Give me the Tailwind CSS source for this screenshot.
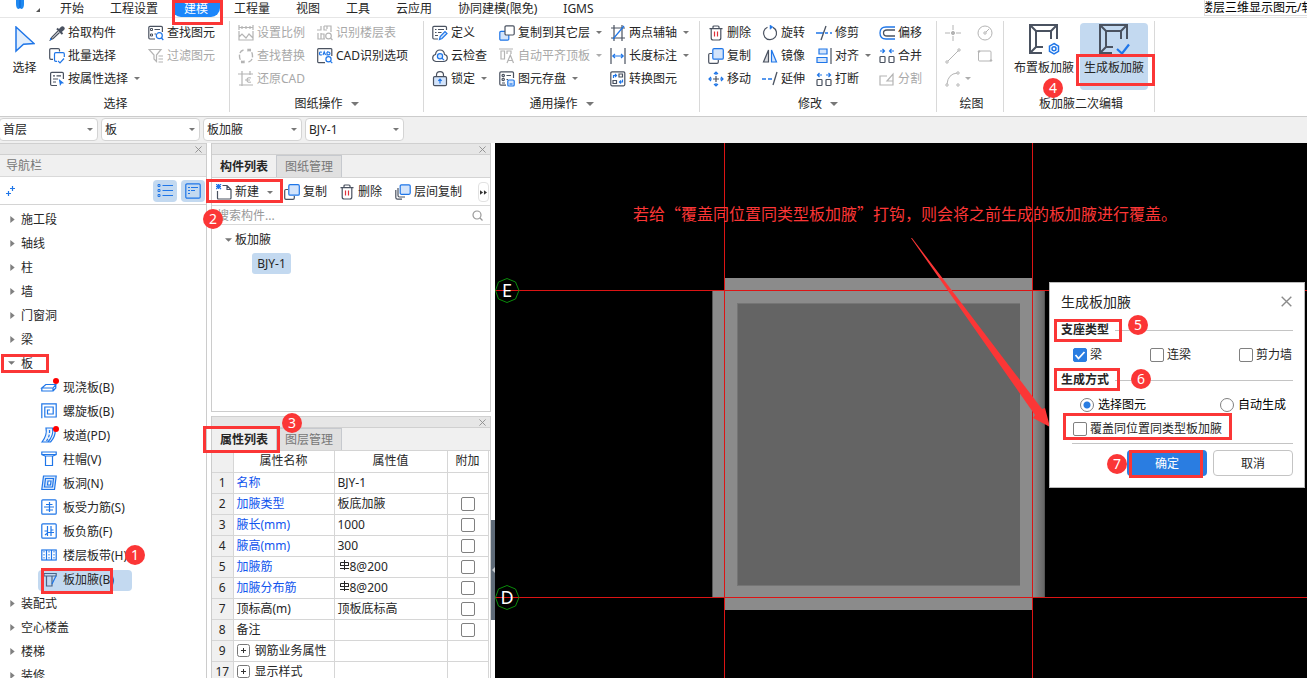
<!DOCTYPE html>
<html lang="zh-CN">
<head>
<meta charset="utf-8">
<title>板加腋建模</title>
<script src="https://cdn.jsdelivr.net/npm/@tailwindcss/browser@4"></script>
</head>
<body class="relative flex h-screen flex-col overflow-hidden bg-white font-['Noto_Sans','Noto_Sans_CJK_SC',sans-serif] text-xs text-[#262626]">

<!-- shared glyphs -->
<svg class="hidden">
  <symbol id="down" viewBox="0 0 6 3"><path d="M0 0h6L3 3z" fill="#777"/></symbol>
  <symbol id="right" viewBox="0 0 5 8"><path d="M0 0l5 4-5 4z" fill="#808080"/></symbol>
  <symbol id="close" viewBox="0 0 8 8"><path d="M.5.5l7 7M7.5.5l-7 7" stroke="#8a8a8a" fill="none"/></symbol>
  <symbol id="trash" viewBox="0 0 16 16" fill="none" stroke="#4a5260" stroke-width="1.2"><path d="M1.5 3.6h13M5 3.5V2q0-1 1-1h4q1 0 1 1v1.5M3.2 3.6v9.400q0 2 2 2h5.600q2 0 2-2V3.600"/><path d="M6.500 6.500v5M9.500 6.500v5" stroke="#e0303a"/></symbol>
  <symbol id="copy" viewBox="0 0 16 16" fill="none" stroke="#4a5260" stroke-width="1.200"><path d="M4 5.500H2q-1.300 0-1.300 1.300V14q0 1.300 1.300 1.300h7q1.300 0 1.300-1.300v-2"/><rect x="4.800" y=".7" width="10.500" height="10.500" rx="1.300" fill="#d3e4fb" stroke="#1f76e8"/></symbol>
  <symbol id="haunch" viewBox="0 0 32 32" fill="none" stroke="#4a5260" stroke-width="2"><path d="M14 30H2V2h27v14M8 24V8h15v8M8 24h7M2 2l6 6M29 2l-6 6M2 30l6-6"/></symbol>
</svg>

<!-- menu tabs -->
<header class="flex h-[18px] shrink-0 items-center border-b border-[#e6e6e6]">
  <div class="flex w-[60px] shrink-0 self-stretch pl-4">
    <svg class="h-[12px] w-[26px]" viewBox="0 0 26 12"><path d="M0 0h8v4q0 5-3 5L4 8 3 9Q0 9 0 4z" fill="#1e88f0"/><path d="M4 0v8" stroke="#0a63d0"/><path d="M24 8v4h-4z" fill="#555"/></svg>
  </div>
  <nav class="flex items-center gap-[26px] whitespace-nowrap">
    <button>开始</button><button>工程设置</button>
    <button class="-mx-3 h-[17px] rounded-b-[9px] bg-[#1b86fb] px-3 text-white">建模</button>
    <button>工程量</button><button>视图</button><button>工具</button><button>云应用</button><button>协同建模(限免)</button><button>IGMS</button>
  </nav>
  <div class="ml-auto h-4 w-[103px] shrink-0 self-start overflow-hidden border-b border-l border-[#ddd] leading-4 whitespace-nowrap text-black"><span class="-ml-1">楼层三维显示图元/软件</span></div>
</header>

<!-- ribbon -->
<div class="flex h-[99px] shrink-0 border-b border-[#ccc] pt-[3px] whitespace-nowrap [&_svg]:shrink-0">

  <section class="flex h-[91px] w-[229px] shrink-0 flex-col">
    <div class="flex">
      <button class="flex w-[49px] flex-col items-center gap-[5px] pt-[5px]">
        <svg class="h-[29px] w-5" viewBox="0 0 20 29"><path d="M1 1l18 16.500-10.500.8L1 25z" fill="#e2eefc" stroke="#1f76e8" stroke-width="1.500"/></svg>
        <span>选择</span>
      </button>
      <div class="w-[99px]">
        <button class="flex h-[23px] items-center gap-[3px]"><svg class="size-4" viewBox="0 0 16 16" fill="none"><path d="M9.500 4.500L11.800 2Q13.500.5 15 2t0 3l-2.500 2.300z" fill="#4a5260"/><path d="M8 3.500l5.500 5.500" stroke="#4a5260" stroke-width="2"/><path d="M9 6l-6 6.200-1.500 2.600 2.700-1.300L10.500 7.500" stroke="#4a5260" stroke-width="1.200"/><path d="M1 12.500l2 2-2 1z" fill="#1f76e8"/></svg>拾取构件</button>
        <button class="flex h-[23px] items-center gap-[3px]"><svg class="size-4" viewBox="0 0 16 16" fill="none" stroke="#4a5260" stroke-width="1.200"><path d="M10.500 3.500V2q0-1.300-1.300-1.300H2Q.7.700.7 2v8q0 1.300 1.300 1.300h2"/><path d="M15.300 9V6q0-1.300-1.300-1.300H6.800q-1.300 0-1.300 1.300v6q0 1.300 1.300 1.300H8" stroke="#1f76e8"/><path d="M9 12.800l2 2 4-4.300" stroke="#1f76e8"/></svg>批量选择</button>
        <button class="flex h-[23px] items-center gap-[3px]"><svg class="size-4" viewBox="0 0 16 16" fill="none" stroke="#4a5260" stroke-width="1.200"><path d="M14.400 8V2.500q0-1.200-1.200-1.200H2.800q-1.200 0-1.200 1.200v10.800q0 1.200 1.200 1.200H8"/><path d="M4 4.800h2M7.500 4.800H12M4 8h5M4 11h3"/><path d="M9.800 8l5.400 4.200-2.600.4-1.600 2.400z" fill="#1f76e8" stroke="none"/></svg>按属性选择<svg class="ml-[3px] h-[3px] w-[6px]"><use href="#down"/></svg></button>
      </div>
      <div>
        <button class="flex h-[23px] items-center gap-[3px]"><svg class="size-4" viewBox="0 0 16 16" fill="none" stroke="#4a5260" stroke-width="1.200"><path d="M14.400 7V2.500q0-1.200-1.200-1.200H2Q.8 1.300.8 2.500v10.300Q.8 14 2 14h5M6.500 4.500H12M6.500 9H8"/><path d="M2.500 3.500h2v2h-2zM2.500 9h2v2h-2z" stroke-width="1"/><circle cx="11.300" cy="10.700" r="3" stroke="#1f76e8"/><path d="M13.500 13l1.800 2" stroke="#1f76e8"/></svg>查找图元</button>
        <button class="flex h-[23px] items-center gap-[3px] text-[#a8a8a8]"><svg class="size-4" viewBox="0 0 16 16" fill="none" stroke="#b4b4b4" stroke-width="1.200"><path d="M1 1.500h12L8.500 7v6.500L6 11V7zM10.500 8H15M10.500 11H15M10.500 14H15"/></svg>过滤图元</button>
      </div>
    </div>
    <div class="mt-auto pl-[2px] text-center">选择</div>
  </section>

  <section class="flex h-[91px] w-[194px] shrink-0 flex-col border-l border-[#d9d9d9]">
    <div class="flex pl-2">
      <div class="w-[79px] text-[#a8a8a8]">
        <button class="flex h-[23px] items-center gap-[3px]"><svg class="size-4" viewBox="0 0 16 16" fill="none" stroke="#b4b4b4" stroke-width="1.200"><path d="M1 0v5M15 0v5M1 2.500h14M4 1v3M8 1v3M12 1v3M1 6v9h14V6M1 12l3-3 4 4 3-4 4 4"/></svg>设置比例</button>
        <button class="flex h-[23px] items-center gap-[3px]"><svg class="size-4" viewBox="0 0 16 16" fill="none" stroke="#b4b4b4" stroke-width="1.400"><path d="M5.500 2Q1.500 3 1.500 8t4 6M3 14.500h3v-3M10.500 14q4-1 4-6t-4-6M13 1.500h-3v3" stroke-dasharray="5 1.500"/></svg>查找替换</button>
        <button class="flex h-[23px] items-center gap-[3px]"><svg class="size-4" viewBox="0 0 16 16" fill="none" stroke="#b4b4b4" stroke-width="1.200"><path d="M4 0v15M0 3h15M12 0v4M1 14h14M13 7q-4-1-4 2t4 2M7 9h5"/></svg>还原CAD</button>
      </div>
      <div>
        <button class="flex h-[23px] items-center gap-[3px] text-[#a8a8a8]"><svg class="size-4" viewBox="0 0 16 16" fill="none" stroke="#b4b4b4" stroke-width="1.200"><path d="M4 1v4H0M7 1h7v6M7 1v4h3M4 8v6M1 8v6h7M4 9h3v5M10 1v3"/><circle cx="11.500" cy="11" r="2.800"/><path d="M13.500 13l2 2"/></svg>识别楼层表</button>
        <button class="flex h-[23px] items-center gap-[3px]"><svg class="size-4" viewBox="0 0 16 16" fill="none" stroke="#4a5260" stroke-width="1.200"><path d="M14.800 8V1.500q0-.8-.8-.8H1.500q-.8 0-.8.8v12.300q0 .8.800.8H8"/><path d="M5 4.300q-2.500-1-2.500 1.200T5 6.700M6 7l1.200-3.200L8.500 7M10 3.900v3q3 .2 3-1.500t-3-1.500" stroke="#1f76e8"/><circle cx="11.500" cy="11.300" r="2.600" stroke="#1f76e8"/><path d="M13.500 13.300l1.800 1.800" stroke="#1f76e8"/></svg>CAD识别选项</button>
      </div>
    </div>
    <div class="mt-auto flex items-center justify-center gap-2">图纸操作<svg class="h-1 w-2"><use href="#down"/></svg></div>
  </section>

  <section class="flex h-[91px] w-[276px] shrink-0 flex-col border-l border-[#d9d9d9]">
    <div class="flex pl-2">
      <div class="w-[67px]">
        <button class="flex h-[23px] items-center gap-[3px]"><svg class="size-4" viewBox="0 0 16 16" fill="none" stroke="#4a5260" stroke-width="1.200"><path d="M14.500 5V2.500q0-1.200-1.200-1.200H2Q.8 1.300.8 2.500v10.300Q.8 14 2 14h4M3 4.500h1.500M6 4.500h6M3 7.500h1.500M6 7.500h3.500M3 10.500h3"/><path d="M7.500 14.500l.7-3L13 6.500l2 2-5 5z" fill="#d3e4fb" stroke="#1f76e8"/></svg>定义</button>
        <button class="flex h-[23px] items-center gap-[3px]"><svg class="size-4" viewBox="0 0 16 16" fill="none" stroke="#4a5260" stroke-width="1.200"><path d="M4 13.500Q.7 13 .7 10T3.500 6.500Q4 2 8 2t4.500 4.500Q15.300 7 15.300 10T12 13.500z"/><circle cx="8" cy="8.200" r="2.600" fill="#d3e4fb" stroke="#1f76e8"/><path d="M9.800 10l2.200 2.200" stroke="#1f76e8"/></svg>云检查</button>
        <button class="flex h-[23px] items-center gap-[3px]"><svg class="size-4" viewBox="0 0 16 16" fill="none" stroke="#4a5260" stroke-width="1.200"><path d="M4.500 5.500V4q0-3.300 3.500-3.300T11.500 4v1.500"/><rect x="1.500" y="5.600" width="13" height="9" rx="1.200" fill="#d3e4fb"/><path d="M8 12.500V9M6.300 9.800L8 8l1.700 1.800" stroke="#1f76e8"/></svg>锁定<svg class="ml-[3px] h-[3px] w-[6px]"><use href="#down"/></svg></button>
      </div>
      <div class="w-[111px]">
        <button class="flex h-[23px] items-center gap-[3px]"><svg class="size-4" viewBox="0 0 16 16" fill="none" stroke-width="1.200"><rect x=".8" y="6.300" width="9" height="8.900" rx="1.200" fill="#d3e4fb" stroke="#1f76e8"/><rect x="6" y=".8" width="9.200" height="9.200" rx="1.200" fill="#fff" stroke="#4a5260"/></svg>复制到其它层<svg class="ml-[3px] h-[3px] w-[6px]"><use href="#down"/></svg></button>
        <button class="flex h-[23px] items-center gap-[3px] text-[#a8a8a8]"><svg class="size-4" viewBox="0 0 16 16" fill="none" stroke="#b4b4b4" stroke-width="1.200"><path d="M0 1h14M2 3h3.500v8H2zM8 6V3h4v3M8 15l3.300-8L14.500 15M9.200 12.500h4"/></svg>自动平齐顶板<svg class="ml-[3px] h-[3px] w-[6px] opacity-60"><use href="#down"/></svg></button>
        <button class="flex h-[23px] items-center gap-[3px]"><svg class="size-4" viewBox="0 0 16 16" fill="none" stroke="#4a5260" stroke-width="1.200"><path d="M14.500 7V2q0-1.200-1.200-1.200H2Q.8.800.8 2v11Q.8 14.200 2 14.200h5M7.500 4.500H12M7.500 8.500H9M3 12h3"/><circle cx="4.200" cy="4.500" r="1.200"/><circle cx="4.200" cy="8.500" r="1.200"/><rect x="8.800" y="9" width="6.400" height="6" rx="1" fill="#d3e4fb" stroke="#1f76e8"/><path d="M10.500 13h3" stroke="#1f76e8"/></svg>图元存盘<svg class="ml-[3px] h-[3px] w-[6px]"><use href="#down"/></svg></button>
      </div>
      <div>
        <button class="flex h-[23px] items-center gap-[3px]"><svg class="size-4" viewBox="0 0 16 16" fill="none" stroke="#4a5260" stroke-width="1.200"><path d="M4 0v16M12 0v16M1 3h14M1 13h14"/><path d="M3 14L14 1" stroke="#1f76e8"/></svg>两点辅轴<svg class="ml-[3px] h-[3px] w-[6px]"><use href="#down"/></svg></button>
        <button class="flex h-[23px] items-center gap-[3px]"><svg class="size-4" viewBox="0 0 16 16" fill="none" stroke="#4a5260" stroke-width="1.200"><path d="M1 0v16M15 0v16"/><path d="M2.500 8h11M5 6L2.800 8 5 10M11 6l2.200 2L11 10" stroke="#1f76e8"/></svg>长度标注<svg class="ml-[3px] h-[3px] w-[6px]"><use href="#down"/></svg></button>
        <button class="flex h-[23px] items-center gap-[3px]"><svg class="size-4" viewBox="0 0 16 16" fill="none" stroke="#4a5260" stroke-width="1.200"><rect x=".8" y=".8" width="14" height="14" rx="1.200"/><path d="M9 3h3.500v3H9zM3 9.500h3.500v3H3z"/><path d="M3.500 7V4.500H6M5 3l1.500 1.500L5 6M12.500 8.500V11H10M11 9.500L9.500 11l1.500 1.500" stroke="#1f76e8"/></svg>转换图元</button>
      </div>
    </div>
    <div class="mt-auto flex items-center justify-center gap-2">通用操作<svg class="h-1 w-2"><use href="#down"/></svg></div>
  </section>

  <section class="flex h-[91px] w-[237px] shrink-0 flex-col border-l border-[#d9d9d9]">
    <div class="flex pl-2">
      <div class="w-[54px]">
        <button class="flex h-[23px] items-center gap-[3px]"><svg class="size-4"><use href="#trash"/></svg>删除</button>
        <button class="flex h-[23px] items-center gap-[3px]"><svg class="size-4"><use href="#copy"/></svg>复制</button>
        <button class="flex h-[23px] items-center gap-[3px]"><svg class="size-4" viewBox="0 0 16 16" fill="none" stroke="#1f76e8" stroke-width="1.200"><path d="M8 5v6M5 8h6" stroke="#4a5260"/><path d="M8 4V1M6 3l2-2 2 2M8 12v3M6 13l2 2 2-2M4 8H1M3 6L1 8l2 2M12 8h3M13 6l2 2-2 2"/></svg>移动</button>
      </div>
      <div class="w-[54px]">
        <button class="flex h-[23px] items-center gap-[3px]"><svg class="size-4" viewBox="0 0 16 16" fill="none" stroke="#4a5260" stroke-width="1.200"><path d="M5.500 2.200a6.500 6.500 0 1 0 5.500.2"/><path d="M8 0l3 2-3 2.300z" fill="#1f76e8" stroke="#1f76e8" stroke-width=".5"/></svg>旋转</button>
        <button class="flex h-[23px] items-center gap-[3px]"><svg class="size-4" viewBox="0 0 16 16" fill="none" stroke-width="1.200"><path d="M6.500 2v12H1.500z" fill="#d8dade" stroke="#4a5260"/><path d="M9.500 2v12h5z" fill="#d3e4fb" stroke="#1f76e8"/></svg>镜像</button>
        <button class="flex h-[23px] items-center gap-[3px]"><svg class="size-4" viewBox="0 0 16 16" fill="none" stroke-width="1.300"><path d="M0 8h4M6 8h4" stroke="#1f76e8"/><path d="M11 14l4-13" stroke="#4a5260"/></svg>延伸</button>
      </div>
      <div class="w-[63px]">
        <button class="flex h-[23px] items-center gap-[3px]"><svg class="size-4" viewBox="0 0 16 16" fill="none" stroke-width="1.300"><path d="M0 8h7M9 8h3M14 8h2" stroke="#1f76e8"/><path d="M5 15L10 1" stroke="#4a5260"/></svg>修剪</button>
        <button class="flex h-[23px] items-center gap-[3px]"><svg class="size-4" viewBox="0 0 16 16" fill="#d3e4fb" stroke="#1f76e8" stroke-width="1.200"><path d="M3 1h8v5H3zM1 9.500h10v5H1z"/><path d="M15 0v16" stroke="#4a5260"/></svg>对齐<svg class="ml-[3px] h-[3px] w-[6px]"><use href="#down"/></svg></button>
        <button class="flex h-[23px] items-center gap-[3px]"><svg class="size-4" viewBox="0 0 16 16" fill="none" stroke="#4a5260" stroke-width="1.200"><rect x="1" y="8.500" width="5" height="6" rx=".8"/><rect x="10" y="8.500" width="5" height="6" rx=".8"/><path d="M6 4H1.500M3.500 2l-2 2 2 2M10 4h4.500M12.500 2l2 2-2 2" stroke="#1f76e8"/></svg>打断</button>
      </div>
      <div>
        <button class="flex h-[23px] items-center gap-[3px]"><svg class="size-4" viewBox="0 0 16 16" fill="none" stroke-width="1.300"><path d="M16 2H7Q1 2 1 8t6 6h9" stroke="#1f76e8"/><path d="M16 5H8Q4.500 5 4.500 8T8 11h8" stroke="#4a5260"/></svg>偏移</button>
        <button class="flex h-[23px] items-center gap-[3px]"><svg class="size-4" viewBox="0 0 16 16" fill="none" stroke="#4a5260" stroke-width="1.200"><rect x="1" y="8.500" width="5" height="6" rx=".8"/><rect x="10" y="8.500" width="5" height="6" rx=".8"/><path d="M1 3h4.500M3.500 1l2 2-2 2M15 3h-4.500M12.500 1l-2 2 2 2" stroke="#1f76e8"/></svg>合并</button>
        <button class="flex h-[23px] items-center gap-[3px] text-[#a8a8a8]"><svg class="size-4" viewBox="0 0 16 16" fill="none" stroke="#b4b4b4" stroke-width="1.200"><path d="M8 5H1v9h13v-4M8 10l6-7v7z"/></svg>分割</button>
      </div>
    </div>
    <div class="mt-auto flex items-center justify-center gap-2">修改<svg class="h-1 w-2"><use href="#down"/></svg></div>
  </section>

  <section class="flex h-[91px] w-[67px] shrink-0 flex-col border-l border-[#d9d9d9]">
    <div class="grid grid-cols-[32px_16px] pl-2">
      <button class="flex h-[23px] items-center" aria-label="点"><svg class="size-4" viewBox="0 0 16 16" stroke="#b4b4b4" fill="#b4b4b4"><path d="M8 0v5M8 11v5M0 8h5M11 8h5"/><circle cx="8" cy="8" r="1.600"/></svg></button>
      <button class="flex h-[23px] items-center" aria-label="圆"><svg class="size-4" viewBox="0 0 16 16" stroke="#b4b4b4" fill="none"><circle cx="8" cy="8" r="7"/><circle cx="8" cy="8" r="1.200"/><path d="M9 7l3-3"/></svg></button>
      <button class="flex h-[23px] items-center" aria-label="直线"><svg class="size-4" viewBox="0 0 16 16" stroke="#b4b4b4" fill="none"><path d="M3 13L13.500 2.500"/><circle cx="2" cy="14" r="1.200"/><circle cx="14" cy="2" r="1.200"/></svg></button>
      <button class="flex h-[23px] items-center" aria-label="矩形"><svg class="size-4" viewBox="0 0 16 16" stroke="#b4b4b4" fill="none"><rect x="1.500" y="3" width="12.500" height="10" rx="1"/><circle cx="14" cy="12.500" r=".8" fill="#b4b4b4"/><circle cx="2" cy="3.500" r=".8" fill="#b4b4b4"/></svg></button>
      <button class="flex h-[23px] items-center gap-1" aria-label="弧"><svg class="size-4" viewBox="0 0 16 16" stroke="#b4b4b4" fill="none"><path d="M2 13Q3 3 12 2"/><circle cx="2" cy="14" r="1.200"/><circle cx="13" cy="2" r="1.200"/><circle cx="13" cy="14" r="1.200"/></svg><svg class="h-[3px] w-[6px] opacity-60"><use href="#down"/></svg></button>
    </div>
    <div class="mt-auto pl-[3px] text-center">绘图</div>
  </section>

  <section class="flex h-[91px] w-[152px] shrink-0 flex-col border-x border-[#d9d9d9] pt-[2px]">
    <div class="flex px-[6px]">
      <button class="flex h-[67px] w-[68px] flex-col items-center gap-[5px] rounded">
        <svg class="size-8" viewBox="0 0 32 32" fill="none" stroke="#1f76e8" stroke-width="1.500"><use href="#haunch"/><path d="M26 20.500l4.500 2.600v5.200L26 31l-4.500-2.700v-5.200z"/><circle cx="26" cy="25.700" r="2"/></svg>
        布置板加腋</button>
      <button class="ml-[2px] flex h-[67px] w-[68px] flex-col items-center gap-[5px] rounded bg-[#c3d9f0]">
        <svg class="size-8" viewBox="0 0 32 32" fill="none" stroke="#1f76e8" stroke-width="2.200"><use href="#haunch"/><path d="M19 26l5 4.500 7-9"/></svg>
        生成板加腋</button>
    </div>
    <div class="mt-auto pl-1 text-center">板加腋二次编辑</div>
  </section>
</div>

<!-- context selectors -->
<div class="flex h-[26px] shrink-0 gap-[3px] bg-[#f0f0f0] pt-px">
  <label class="relative -ml-px block h-[23px] w-[99px]"><select aria-label="楼层" class="size-full appearance-none rounded border border-[#d4d4d4] bg-white pl-[3px]"><option>首层</option></select><svg class="pointer-events-none absolute top-[10px] right-[5px] h-[3px] w-[6px]"><use href="#down"/></svg></label>
  <label class="relative block h-[23px] w-[99px]"><select aria-label="类别" class="size-full appearance-none rounded border border-[#d4d4d4] bg-white pl-[3px]"><option>板</option></select><svg class="pointer-events-none absolute top-[10px] right-[5px] h-[3px] w-[6px]"><use href="#down"/></svg></label>
  <label class="relative block h-[23px] w-[99px]"><select aria-label="构件类型" class="size-full appearance-none rounded border border-[#d4d4d4] bg-white pl-[3px]"><option>板加腋</option></select><svg class="pointer-events-none absolute top-[10px] right-[5px] h-[3px] w-[6px]"><use href="#down"/></svg></label>
  <label class="relative block h-[23px] w-[99px]"><select aria-label="构件" class="size-full appearance-none rounded border border-[#d4d4d4] bg-white pl-[3px]"><option>BJY-1</option></select><svg class="pointer-events-none absolute top-[10px] right-[5px] h-[3px] w-[6px]"><use href="#down"/></svg></label>
</div>

<main class="flex min-h-0 flex-1">

  <!-- navigation -->
  <aside class="flex w-[207px] shrink-0 flex-col overflow-hidden border-r border-[#ccc] whitespace-nowrap">
    <div class="flex h-3 shrink-0 items-center justify-end border-y border-[#d0d0d0] bg-[#e6e6e6] pr-1"><button aria-label="关闭"><svg class="size-[7px]"><use href="#close"/></svg></button></div>
    <h2 class="flex h-[22px] shrink-0 items-center border-b border-[#d9d9d9] bg-[#f0f0f0] pt-px pl-[6px] text-[#777]">导航栏</h2>
    <div class="flex h-7 shrink-0 items-center gap-1 border-b border-[#d4d4d4] pr-px pl-[6px]">
      <button class="mr-auto" aria-label="添加"><svg class="size-[10px]" viewBox="0 0 10 10" stroke="#1f76e8" fill="none"><path d="M6.500 0v5M4 2.500h5M2.500 5v5M0 7.500h5" stroke-width="1.200"/></svg></button>
      <button class="flex h-[22px] w-6 items-center justify-center rounded bg-[#c3d9f0]" aria-label="列表"><svg class="size-4" viewBox="0 0 16 16" stroke="#1f76e8" fill="none"><path d="M1 1.500h2v2H1zM1 6.500h2v2H1zM1 11.500h2v2H1zM5.500 2.500H16M5.500 7.500H16M5.500 12.500H16"/></svg></button>
      <button class="flex h-[22px] w-6 items-center justify-center rounded bg-[#c3d9f0]" aria-label="详情"><svg class="size-4" viewBox="0 0 16 16" stroke="#1f76e8" fill="none" stroke-width="1.200"><rect x=".8" y=".8" width="14.400" height="14.400" rx="1.200"/><path d="M3 4.500h2M6 4.500h7M3 7.500h2M6 7.500h4M3 10.500h2"/></svg></button>
    </div>
    <ul class="pt-[3px] [&>li]:flex [&>li]:h-6 [&>li]:shrink-0 [&>li]:items-center">
      <li class="gap-[6px] pl-[10px]"><svg class="mb-[2px] h-[7px] w-[5px]"><use href="#right"/></svg>施工段</li>
      <li class="gap-[6px] pl-[10px]"><svg class="mb-[2px] h-[7px] w-[5px]"><use href="#right"/></svg>轴线</li>
      <li class="gap-[6px] pl-[10px]"><svg class="mb-[2px] h-[7px] w-[5px]"><use href="#right"/></svg>柱</li>
      <li class="gap-[6px] pl-[10px]"><svg class="mb-[2px] h-[7px] w-[5px]"><use href="#right"/></svg>墙</li>
      <li class="gap-[6px] pl-[10px]"><svg class="mb-[2px] h-[7px] w-[5px]"><use href="#right"/></svg>门窗洞</li>
      <li class="gap-[6px] pl-[10px]"><svg class="mb-[2px] h-[7px] w-[5px]"><use href="#right"/></svg>梁</li>
      <li class="gap-[6px] pl-2"><svg class="mb-[2px] h-[4px] w-[7px]"><use href="#down"/></svg>板</li>
      <li class="gap-[6px] pl-[41px]"><svg class="mb-[2px] size-4 overflow-visible" viewBox="0 0 16 16" fill="none" stroke="#1f76e8" stroke-width="1.200"><path d="M.8 9l4-3.500h10L12 9zM.8 9v3H12V9M12 12l2.800-3V5.500"/><circle cx="15" cy="2" r="3" fill="#f00" stroke="none"/></svg>现浇板(B)</li>
      <li class="gap-[6px] pl-[41px]"><svg class="mb-[2px] size-4" viewBox="0 0 16 16" fill="none" stroke="#1f76e8" stroke-width="1.200"><path d="M.8 15.200V.8h14.400V14H3.800V4h8.400v7H6.500V7H9"/></svg>螺旋板(B)</li>
      <li class="gap-[6px] pl-[41px]"><svg class="mb-[2px] size-4 overflow-visible" viewBox="0 0 16 16" fill="none" stroke="#1f76e8" stroke-width="1.200"><path d="M5 1q1.500 7-4 14h6q6-7 4.500-14zM11.500 1l2.500 1.500Q15 9 9.500 15H7" fill="#eaf2fd"/><path d="M8.500 3q.5 6-3 11" stroke-dasharray="3 1.500"/><circle cx="15" cy="2" r="3" fill="#f00" stroke="none"/></svg>坡道(PD)</li>
      <li class="gap-[6px] pl-[41px]"><svg class="mb-[2px] size-4" viewBox="0 0 16 16" fill="none" stroke="#1f76e8" stroke-width="1.200"><path d="M.8 1h14.400v2.500L12 5H4L.8 3.500zM4.500 5v9.500h7V5M.8 3.500h14.400"/></svg>柱帽(V)</li>
      <li class="gap-[6px] pl-[41px]"><svg class="mb-[2px] size-4" viewBox="0 0 16 16" fill="none" stroke="#1f76e8" stroke-width="1.200"><path d="M2.500 1h12.700L13.500 14.500H.8z" fill="#d3e4fb"/><path d="M4.500 3.500h8L11.500 12h-8z"/><path d="M7 6h3l-.5 4h-3z" fill="#fff"/></svg>板洞(N)</li>
      <li class="gap-[6px] pl-[41px]"><svg class="mb-[2px] size-4" viewBox="0 0 16 16" fill="none" stroke="#1f76e8" stroke-width="1.200"><rect x=".8" y=".8" width="14.400" height="14.400" rx="1"/><path d="M5 5.500h6.500M3 8h10M5 11h7M8.500 3v10"/></svg>板受力筋(S)</li>
      <li class="gap-[6px] pl-[41px]"><svg class="mb-[2px] size-4" viewBox="0 0 16 16" fill="none" stroke="#1f76e8" stroke-width="1.200"><rect x=".8" y=".8" width="14.400" height="14.400" rx="1"/><path d="M3.500 8h3M6.500 3v10M10 3v10M6.500 9.500H13M4 12l2.500-2M10 7h2.500"/></svg>板负筋(F)</li>
      <li class="gap-[6px] pl-[41px]"><svg class="mb-[2px] size-4" viewBox="0 0 16 16" fill="none" stroke="#1f76e8" stroke-width="1.200"><rect x=".8" y="3" width="14.400" height="10"/><path d="M5.500 3v10M10.500 3v10"/><path d="M3 4v8M8 4v8M13 4v8" stroke-width="1" stroke-dasharray="1.500 1.500"/></svg>楼层板带(H)</li>
      <li class="pl-[38px]"><button class="flex h-[21px] w-[94px] items-center gap-[6px] rounded bg-[#c3d9f0] pl-[3px]"><svg class="mb-[2px] size-4" viewBox="0 0 16 16" fill="none" stroke="#4a6488" stroke-width="1.200"><path d="M3 2.500h12.200V5H3zM5.500 5v10h5.500V5"/><path d="M15 5l-4 8M1.500 5H3" stroke="#1f76e8"/></svg>板加腋(B)</button></li>
      <li class="gap-[6px] pl-[10px]"><svg class="mb-[2px] h-[7px] w-[5px]"><use href="#right"/></svg>装配式</li>
      <li class="gap-[6px] pl-[10px]"><svg class="mb-[2px] h-[7px] w-[5px]"><use href="#right"/></svg>空心楼盖</li>
      <li class="gap-[6px] pl-[10px]"><svg class="mb-[2px] h-[7px] w-[5px]"><use href="#right"/></svg>楼梯</li>
      <li class="gap-[6px] pl-[10px]"><svg class="mb-[2px] h-[7px] w-[5px]"><use href="#right"/></svg>装修</li>
    </ul>
  </aside>

  <!-- component list and properties -->
  <div class="ml-1 flex w-[280px] shrink-0 flex-col overflow-hidden whitespace-nowrap">
    <section class="flex h-[269px] shrink-0 flex-col border border-t-0 border-[#ccc]">
      <div class="flex h-3 shrink-0 items-center justify-end border-y border-[#d0d0d0] bg-[#e6e6e6] pr-1"><button aria-label="关闭"><svg class="size-[7px]"><use href="#close"/></svg></button></div>
      <div class="flex h-[23px] shrink-0 border-b border-[#d4d4d4] bg-[#f0f0f0]">
        <button class="w-16 pt-px font-bold">构件列表</button>
        <button class="w-[66px] border border-b-0 border-[#c6c9ce] bg-[#e0e0e0] text-[#777]">图纸管理</button>
      </div>
      <div class="flex h-7 shrink-0 items-center border-b border-[#d9d9d9] pt-px pl-1">
        <button class="flex w-[68px] items-center gap-[3px]"><svg class="size-4" viewBox="0 0 16 16" fill="none" stroke="#4a5260" stroke-width="1.200"><path d="M6.500 1.500H11l4 4V14q0 1-1 1H2.500q-1 0-1-1V7M11 1.500v4h4"/><path d="M0 0l5 5M5 0L0 5M2.500 0v5M0 2.500h5" stroke="#1f76e8"/></svg>新建<svg class="ml-[5px] h-[3px] w-[6px]"><use href="#down"/></svg></button>
        <button class="flex w-[55px] items-center gap-[3px]"><svg class="size-4"><use href="#copy"/></svg>复制</button>
        <button class="flex w-14 items-center gap-[3px]"><svg class="size-4"><use href="#trash"/></svg>删除</button>
        <button class="flex items-center gap-[3px]"><svg class="size-4" viewBox="0 0 16 16" fill="none" stroke="#4a5260" stroke-width="1.200"><path d="M.8 6v7.500q0 1.700 1.700 1.700H7M3 4v7.500q0 1.500 1.500 1.500H10"/><rect x="5.200" y=".8" width="10" height="9.500" rx="1.200" fill="#d3e4fb" stroke="#1f76e8"/></svg>层间复制</button>
        <button class="mr-px ml-auto flex h-5 w-[11px] items-center justify-center rounded border border-[#e2e2e2]" aria-label="更多"><svg class="h-[5px] w-[7px]" viewBox="0 0 8 5"><path d="M0 0l3.500 2.500L0 5zM4.500 0L8 2.500 4.500 5z" fill="#333"/></svg></button>
      </div>
      <div class="flex h-[19px] shrink-0 items-center border-b border-[#d9d9d9] pr-[7px] pl-[5px]">
        <input aria-label="搜索构件" placeholder="搜索构件..." class="min-w-0 flex-1 pt-[2px] outline-none placeholder:text-[#999]">
        <svg class="size-[11px]" viewBox="0 0 11 11" fill="none" stroke="#999" stroke-width="1.200"><circle cx="5" cy="5" r="4"/><path d="M8 8l2.500 2.500"/></svg>
      </div>
      <div class="flex h-[26px] items-center gap-[3px] pt-1 pl-[13px]"><svg class="h-[4px] w-[7px]"><use href="#down"/></svg>板加腋</div>
      <button class="mt-[2px] ml-10 h-[21px] w-[39px] rounded-[3px] bg-[#c3d9f0]">BJY-1</button>
    </section>

    <section class="mt-1 flex min-h-0 flex-1 flex-col overflow-hidden border-x border-[#ccc]">
      <div class="flex h-3 shrink-0 items-center justify-end border-y border-[#d0d0d0] bg-[#e6e6e6] pr-1"><button aria-label="关闭"><svg class="size-[7px]"><use href="#close"/></svg></button></div>
      <div class="flex h-[23px] shrink-0 border-b border-[#d4d4d4] bg-[#f0f0f0]">
        <button class="w-16 pt-px font-bold">属性列表</button>
        <button class="w-[66px] border border-b-0 border-[#c6c9ce] bg-[#e0e0e0] text-[#777]">图层管理</button>
      </div>
      <table class="w-[276px] table-fixed border-collapse [&_input]:mx-auto [&_input]:block [&_input]:size-[14px] [&_input]:appearance-none [&_input]:rounded-[2px] [&_input]:border [&_input]:border-[#808080] [&_td]:border-r [&_td]:border-b [&_td]:border-[#d6d6d6] [&_td]:p-0 [&_td]:pl-[3px] [&_td:last-child]:pl-0 [&_th]:border-r [&_th]:border-b [&_th]:border-[#d6d6d6] [&_th]:p-0 [&_th]:font-normal [&_tr]:h-[21px]">
        <colgroup><col class="w-[21px]"><col class="w-[101px]"><col class="w-[113px]"><col class="w-[41px]"></colgroup>
        <thead><tr><th class="bg-[#f0f0f0]"></th><th>属性名称</th><th>属性值</th><th>附加</th></tr></thead>
        <tbody>
          <tr><th class="bg-[#f0f0f0]">1</th><td class="text-[#1155ee]">名称</td><td>BJY-1</td><td></td></tr>
          <tr><th class="bg-[#f0f0f0]">2</th><td class="text-[#1155ee]">加腋类型</td><td>板底加腋</td><td><input type="checkbox" aria-label="附加加腋类型"></td></tr>
          <tr><th class="bg-[#f0f0f0]">3</th><td class="text-[#1155ee]">腋长(mm)</td><td>1000</td><td><input type="checkbox" aria-label="附加腋长"></td></tr>
          <tr><th class="bg-[#f0f0f0]">4</th><td class="text-[#1155ee]">腋高(mm)</td><td>300</td><td><input type="checkbox" aria-label="附加腋高"></td></tr>
          <tr><th class="bg-[#f0f0f0]">5</th><td class="text-[#1155ee]">加腋筋</td><td><span class="flex items-center gap-px pl-[2px]"><svg class="mb-[3px] h-[10px] w-[9px]" viewBox="0 0 9 10" fill="none" stroke="#262626"><path d="M4.500 0v10M.5 6V2.500h8V6M.5 5.500h8M0 8.500h9"/></svg>8@200</span></td><td><input type="checkbox" aria-label="附加加腋筋"></td></tr>
          <tr><th class="bg-[#f0f0f0]">6</th><td class="text-[#1155ee]">加腋分布筋</td><td><span class="flex items-center gap-px pl-[2px]"><svg class="mb-[3px] h-[10px] w-[9px]" viewBox="0 0 9 10" fill="none" stroke="#262626"><path d="M4.500 0v10M.5 6V2.500h8V6M.5 5.500h8M0 8.500h9"/></svg>8@200</span></td><td><input type="checkbox" aria-label="附加加腋分布筋"></td></tr>
          <tr><th class="bg-[#f0f0f0]">7</th><td>顶标高(m)</td><td>顶板底标高</td><td><input type="checkbox" aria-label="附加顶标高"></td></tr>
          <tr><th class="bg-[#f0f0f0]">8</th><td>备注</td><td></td><td><input type="checkbox" aria-label="附加备注"></td></tr>
          <tr><th class="bg-[#f0f0f0]">9</th><td><button class="flex items-center gap-[5px]"><svg class="size-[13px]" viewBox="0 0 13 13" fill="none" stroke="#777"><rect x=".5" y=".5" width="12" height="12" rx="2"/><path d="M4 6.500h5M6.500 4v5" stroke="#333"/></svg>钢筋业务属性</button></td><td></td><td></td></tr>
          <tr><th class="bg-[#f0f0f0]">17</th><td><button class="flex items-center gap-[5px]"><svg class="size-[13px]" viewBox="0 0 13 13" fill="none" stroke="#777"><rect x=".5" y=".5" width="12" height="12" rx="2"/><path d="M4 6.500h5M6.500 4v5" stroke="#333"/></svg>显示样式</button></td><td></td><td></td></tr>
        </tbody>
      </table>
    </section>
  </div>

  <!-- splitter -->
  <div class="w-1 shrink-0 pt-[377px]"><button class="flex h-[100px] w-1 items-center justify-end bg-[#5f6b78]" aria-label="折叠"><svg class="h-[6px] w-[3px]" viewBox="0 0 3 6"><path d="M3 0v6L0 3z" fill="#c8ccd0"/></svg></button></div>

  <!-- drawing area -->
  <div class="relative min-w-0 flex-1 overflow-hidden bg-black">
    <svg class="absolute top-0 left-0 h-full w-full" fill="none">
      <defs><linearGradient id="edge"><stop offset="0" stop-color="#8b8b8b"/><stop offset="1" stop-color="#666"/></linearGradient></defs>
      <rect x="230" y="135" width="308" height="332" fill="#8b8b8b"/>
      <rect x="218" y="148" width="320" height="307" fill="#8b8b8b"/>
      <rect x="538" y="148" width="11" height="307" fill="url(#edge)"/>
      <path d="M217.500 148v307M549.500 148v307" stroke="#555"/>
      <rect x="242" y="160" width="283" height="283" fill="#646464"/>
      <path d="M242.500 443V160M242 160.500h283M242 442.500h283" stroke="#757575"/>
      <g fill="#dc1414">
        <rect x="229" y="0" width="1" height="100%"/>
        <rect x="537" y="0" width="1" height="100%"/>
        <rect x="0" y="147" width="100%" height="1"/>
        <rect x="0" y="454" width="100%" height="1"/>
      </g>
      <path d="M12 135.500l8.500 3.500 3.500 8.500-3.500 8.500-8.500 3.500-8.500-3.500L.5 147.500l3-8.500zM12 442.500l8.500 3.500 3.500 8.500-3.500 8.500-8.500 3.500-8.500-3.500-3-8.500 3-8.500z" stroke="#0a8a0a"/>
      <text x="12" y="154" text-anchor="middle" font-size="18" fill="#fff">E</text>
      <text x="12" y="461" text-anchor="middle" font-size="18" fill="#fff">D</text>
    </svg>
    <p class="absolute top-[58px] left-[138px] font-['Noto_Sans_CJK_SC',sans-serif] text-base whitespace-nowrap text-[#fb3636]">若给“覆盖同位置同类型板加腋”打钩，则会将之前生成的板加腋进行覆盖。</p>
    <svg class="absolute top-0 left-0 h-[300px] w-[560px]"><path d="M416 95h1L547 266l3-1 5 19-17-9 2-3z" fill="#fb3636"/></svg>

    <!-- dialog -->
    <form class="absolute top-[139px] left-[554px] w-64 border border-[#bbb] bg-white px-[11px] pb-[11px] whitespace-nowrap [&_input[type=checkbox]]:size-[14px] [&_input[type=checkbox]]:appearance-none [&_input[type=checkbox]]:rounded-[2px] [&_input[type=checkbox]]:border [&_input[type=checkbox]]:border-[#808080] [&_input[type=radio]]:size-[14px] [&_input[type=radio]]:appearance-none [&_input[type=radio]]:rounded-full [&_input[type=radio]]:border [&_input[type=radio]]:border-[#808080]" role="dialog" aria-label="生成板加腋">
      <div class="flex h-[37px] items-center justify-between text-sm">生成板加腋<button type="button" aria-label="关闭" class="mr-px"><svg class="size-[11px]" viewBox="0 0 8 8"><use href="#close"/></svg></button></div>
      <div class="flex h-5 items-center gap-[6px] font-bold">支座类型<span class="h-px flex-1 bg-[#c4c4c4]"></span></div>
      <div class="flex h-[30px] items-center justify-between pr-px pl-3">
        <label class="flex items-center gap-[3px]"><span class="relative flex"><input type="checkbox" checked class="checked:border-[#2a7de1]! checked:bg-[#2a7de1]"><svg class="pointer-events-none absolute inset-0 size-[14px]" viewBox="0 0 14 14" fill="none" stroke="#fff" stroke-width="1.800"><path d="M2.500 7l3 3.500L11.500 4"/></svg></span>梁</label>
        <label class="flex items-center gap-[3px]"><input type="checkbox">连梁</label>
        <label class="flex items-center gap-[3px]"><input type="checkbox">剪力墙</label>
      </div>
      <div class="flex h-5 items-center gap-[6px] font-bold">生成方式<span class="h-px flex-1 bg-[#c4c4c4]"></span></div>
      <div class="flex h-[29px] items-center justify-between pr-[7px] pl-[19px] text-black">
        <label class="flex items-center gap-1"><input type="radio" name="mode" checked class="checked:bg-[radial-gradient(circle,#2a7de1_3px,#fff_4px)]">选择图元</label>
        <label class="flex items-center gap-1"><input type="radio" name="mode">自动生成</label>
      </div>
      <div class="ml-[11px] flex h-[25px] items-center border-b border-[#c4c4c4] pb-[5px] pl-px"><label class="flex items-center gap-[3px]"><input type="checkbox">覆盖同位置同类型板加腋</label></div>
      <div class="mt-[6px] flex justify-end gap-[6px]">
        <button type="button" class="h-[26px] w-20 rounded bg-[#2a7de1] pt-px text-white">确定</button>
        <button type="button" class="h-[26px] w-20 rounded border border-[#c4c4c4] pt-px">取消</button>
      </div>
    </form>
  </div>
</main>

<!-- tutorial callouts -->
<div class="pointer-events-none absolute inset-0 [&>b]:absolute [&>b]:size-5 [&>b]:rounded-full [&>b]:bg-[#fb3636] [&>b]:text-center [&>b]:text-sm [&>b]:leading-5 [&>b]:font-normal [&>b]:text-white [&>i]:absolute [&>i]:border-3 [&>i]:border-[#fb3636]">
  <i class="top-0 left-[172px] h-[25px] w-[51px]"></i>
  <i class="top-[54px] left-[1076px] h-8 w-[79px]"></i>
  <i class="top-[179px] left-[206px] h-6 w-[77px]"></i>
  <i class="top-[354px] left-px h-[19px] w-12"></i>
  <i class="top-[426px] left-[203px] h-[27px] w-[77px]"></i>
  <i class="top-[568px] left-[41px] h-[26px] w-[72px]"></i>
  <i class="top-[319px] left-[1054px] h-[23px] w-[68px]"></i>
  <i class="top-[368px] left-[1054px] h-[23px] w-[66px]"></i>
  <i class="top-[413px] left-[1063px] h-[27px] w-[169px]"></i>
  <i class="top-[450px] left-[1129px] h-7 w-[74px]"></i>
  <b class="top-[545px] left-[125px]">1</b>
  <b class="top-[209px] left-[203px]">2</b>
  <b class="top-[413px] left-[282px]">3</b>
  <b class="top-[78px] left-[1043px]">4</b>
  <b class="top-[315px] left-[1128px]">5</b>
  <b class="top-[369px] left-[1131px]">6</b>
  <b class="top-[454px] left-[1107px]">7</b>
</div>
</body>
</html>
